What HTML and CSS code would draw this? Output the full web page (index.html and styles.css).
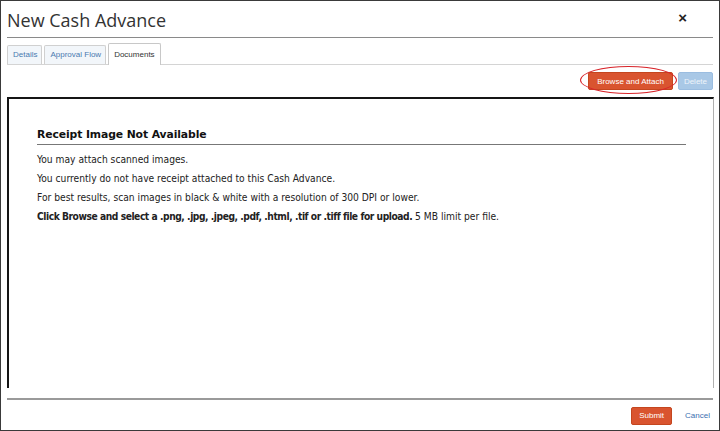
FILE: index.html
```html
<!DOCTYPE html>
<html>
<head>
<meta charset="utf-8">
<link rel="stylesheet" href="styles.css">
</head>
<body>
<div class="page">
  <div class="header">
    <h1 class="title">New Cash Advance</h1>
    <span class="close">×</span>
  </div>
  <div class="tabs">
    <div class="tab">Details</div>
    <div class="tab">Approval Flow</div>
    <div class="tab active">Documents</div>
  </div>
  <div class="toolbar">
    <div class="btn-wrap">
      <button class="btn btn-orange">Browse and Attach</button>
      <span class="highlight"></span>
    </div>
    <button class="btn btn-disabled">Delete</button>
  </div>
  <div class="frame">
    <div class="doc">
      <h2 class="doc-title">Receipt Image Not Available</h2>
      <p class="line">You may attach scanned images.</p>
      <p class="line">You currently do not have receipt attached to this Cash Advance.</p>
      <p class="line">For best results, scan images in black &amp; white with a resolution of 300 DPI or lower.</p>
      <p class="line"><b>Click Browse and select a .png, .jpg, .jpeg, .pdf, .html, .tif or .tiff file for upload.</b> 5 MB limit per file.</p>
    </div>
  </div>
  <div class="footer">
    <button class="btn btn-orange btn-submit">Submit</button>
    <a class="cancel">Cancel</a>
  </div>
</div>
</body>
</html>
```
FILE: styles.css
```css
html, body { margin: 0; padding: 0; background: #fff; }
.page {
  width: 720px; height: 431px; box-sizing: border-box;
  border: 1px solid #3a3a3a;
  padding: 0 6px;
  display: flex; flex-direction: column;
  font-family: "Liberation Sans", Arial, sans-serif;
}
.header {
  height: 36px; display: flex; align-items: center; justify-content: space-between;
  border-bottom: 1px solid #8a8a8a;
}
.title {
  margin: 0; font-family: "Open Sans", sans-serif; font-weight: 400;
  font-size: 18px; font-stretch: 92%; color: #333; padding-top: 2px;
}
.close { font-size: 15px; font-weight: bold; color: #222; margin-right: 26px; margin-top: -4px; }
.tabs {
  display: flex; gap: 2px; margin-top: 6px; align-items: flex-end;
  border-bottom: 1px solid #d4d4d4; height: 20px;
}
.tab {
  height: 19px; line-height: 18px; box-sizing: border-box;
  padding: 0 4px 0 5px; font-size: 8px; color: #4a7ab0;
  border: 1px solid #d0d0d0; border-bottom: none;
  background: #f2f6fa; border-radius: 2px 2px 0 0;
}
.tab.active { height: 22px; line-height: 21px; background: #fff; color: #333; margin-bottom: -1px; border-color: #c8c8c8; padding: 0 5px 0 5px; }
.toolbar {
  height: 32px; display: flex; justify-content: flex-end; align-items: center; gap: 5px;
}
.btn {
  font-family: "Liberation Sans", Arial, sans-serif; font-size: 8px; white-space: nowrap;
  height: 18px; border-radius: 2px; color: #fff; padding: 0 8px; margin: 0;
}
.btn-orange { background: #d9542f; border: 1px solid #c4461f; }
.btn-disabled { background: #a9c8e6; color: #eef4fa; padding: 0 5px; border: 1px solid #9bbde0; }
.btn-wrap { position: relative; display: flex; }
.highlight {
  position: absolute; left: -8px; top: -6px; width: 97px; height: 28px;
  border: 1.5px solid #d8242a; border-radius: 50%; box-sizing: border-box;
}
.frame {
  height: 291px; box-sizing: border-box;
  border-top: 2px solid #151515; border-left: 2px solid #151515; border-right: 1px solid #b0b0b0;
  margin-right: -1px;
}
.doc { padding: 29px 27px 0 28px; }
.doc-title {
  margin: 0; font-family: "DejaVu Sans", Verdana, sans-serif; font-weight: bold;
  font-size: 10.8px; letter-spacing: -0.1px; color: #111; padding-bottom: 3px; border-bottom: 1px solid #777;
}
.line {
  margin: 0; font-family: "DejaVu Sans Condensed", "DejaVu Sans", Verdana, sans-serif;
  font-size: 10.2px; color: #222; line-height: 19px;
}
.line b { letter-spacing: -0.45px; }
.doc-title + .line { margin-top: 5px; }
.footer {
  margin-top: 10px; border-top: 2px solid #9a9a9a;
  display: flex; justify-content: flex-end; align-items: center; height: 30px; padding-right: 3px;
}
.btn-submit { padding: 0 7px; margin-right: 13px; margin-top: 1px; }
.cancel { font-size: 8px; color: #3b6fb0; }
```
